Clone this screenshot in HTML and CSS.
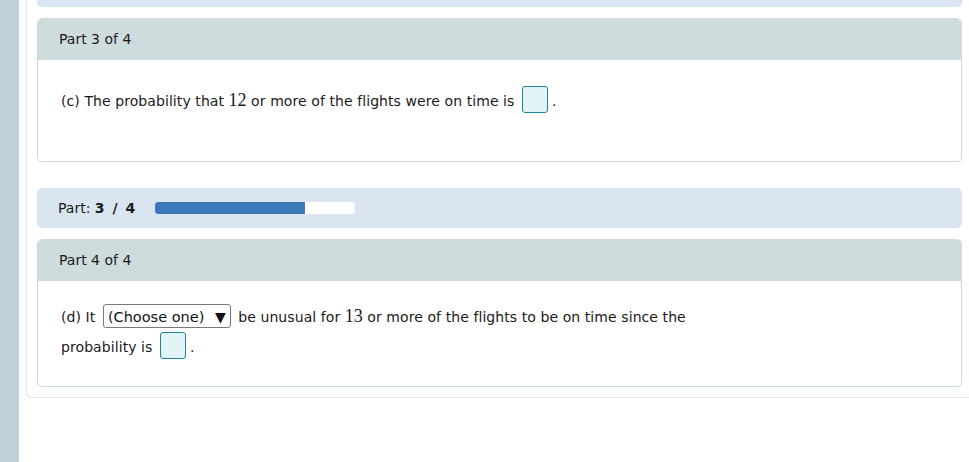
FILE: index.html
```html
<!DOCTYPE html>
<html>
<head>
<meta charset="utf-8">
<link rel="stylesheet" href="styles.css">
</head>
<body>
<div class="sidebar"></div>
<div class="main">
  <div class="container">
    <div class="panel-top"></div>

    <div class="card">
      <div class="card-head">Part 3 of 4</div>
      <div class="card-body">
        <p class="line">(c) The probability that <span class="num">12</span> or more of the flights were on time is <span class="answer"></span><span class="dot">.</span></p>
      </div>
    </div>

    <div class="progress-panel">
      <span class="progress-label">Part: <b>3 / 4</b></span>
      <div class="bar"><div class="bar-fill" style="width: 75%"></div></div>
    </div>

    <div class="card">
      <div class="card-head">Part 4 of 4</div>
      <div class="card-body card-body-multi">
        <p class="line line-multi">(d) It <span class="select">(Choose one) <span class="tri">&#9660;</span></span> be unusual for <span class="num">13</span> or more of the flights to be on time since the<br>probability is <span class="answer"></span><span class="dot">.</span></p>
      </div>
    </div>
  </div>
</div>
</body>
</html>
```

FILE: styles.css
```css
html, body {
  margin: 0;
  padding: 0;
  height: 100%;
  background: #ffffff;
  font-family: "DejaVu Sans", Verdana, sans-serif;
  font-size: 14px;
  color: #1a1a1a;
}

body {
  display: flex;
  overflow: hidden;
}

.sidebar {
  width: 19px;
  flex: none;
  background: #bfd0d8;
  min-height: 462px;
}

.main {
  flex: 1;
  padding-left: 7px;
}

.container {
  border-left: 1px solid #e2e7e9;
  border-bottom: 1px solid #e2e7e9;
  border-bottom-left-radius: 6px;
  padding: 0 7px 10px 10px;
  display: flex;
  flex-direction: column;
}

.panel-top {
  height: 7px;
  background: #d9e6f1;
  border-bottom-left-radius: 5px;
  border-bottom-right-radius: 5px;
  margin-bottom: 11px;
}

.card {
  border: 1px solid #c9dadc;
  border-top: none;
  border-radius: 5px;
  overflow: hidden;
}

.card-head {
  background: #cedcdd;
  height: 42px;
  line-height: 42px;
  padding-left: 21px;
  border-top-left-radius: 5px;
  border-top-right-radius: 5px;
}

.card-body {
  padding: 25px 20px 10px 23px;
  min-height: 66px;
}

.card-body-multi {
  padding: 20px 20px 24px 23px;
  min-height: 0;
}

.line {
  margin: 0;
  line-height: 31px;
  letter-spacing: 0.08px;
}

.line-multi {
  line-height: 30px;
}

.num {
  font-family: "Liberation Serif", "Times New Roman", serif;
  font-size: 18px;
  letter-spacing: 0;
}

.answer {
  display: inline-block;
  width: 24px;
  height: 25px;
  border: 1px solid #1e8597;
  background: #e2f4f8;
  border-radius: 3px;
  vertical-align: -7px;
  margin-left: 3px;
  margin-right: 4px;
}

.progress-panel {
  margin-top: 26px;
  margin-bottom: 11px;
  height: 40px;
  background: #d9e6f1;
  border-radius: 5px;
  display: flex;
  align-items: center;
  padding-left: 21px;
}

.progress-label b {
  font-weight: bold;
  word-spacing: 3px;
}

.bar {
  margin-left: 20px;
  width: 200px;
  height: 12px;
  background: #ffffff;
  border-radius: 3px;
  overflow: hidden;
}

.bar-fill {
  height: 100%;
  background: #3d79bb;
}

.select {
  display: inline-block;
  border: 1px solid #7a7a7a;
  border-radius: 3px;
  height: 22px;
  line-height: 24px;
  padding: 0 4px 0 4px;
  font-size: 14.5px;
  letter-spacing: 0;
  vertical-align: baseline;
  margin: 0 3px 0 3px;
  color: #111;
}

.tri {
  font-size: 14px;
  margin-left: 6px;
}
```
